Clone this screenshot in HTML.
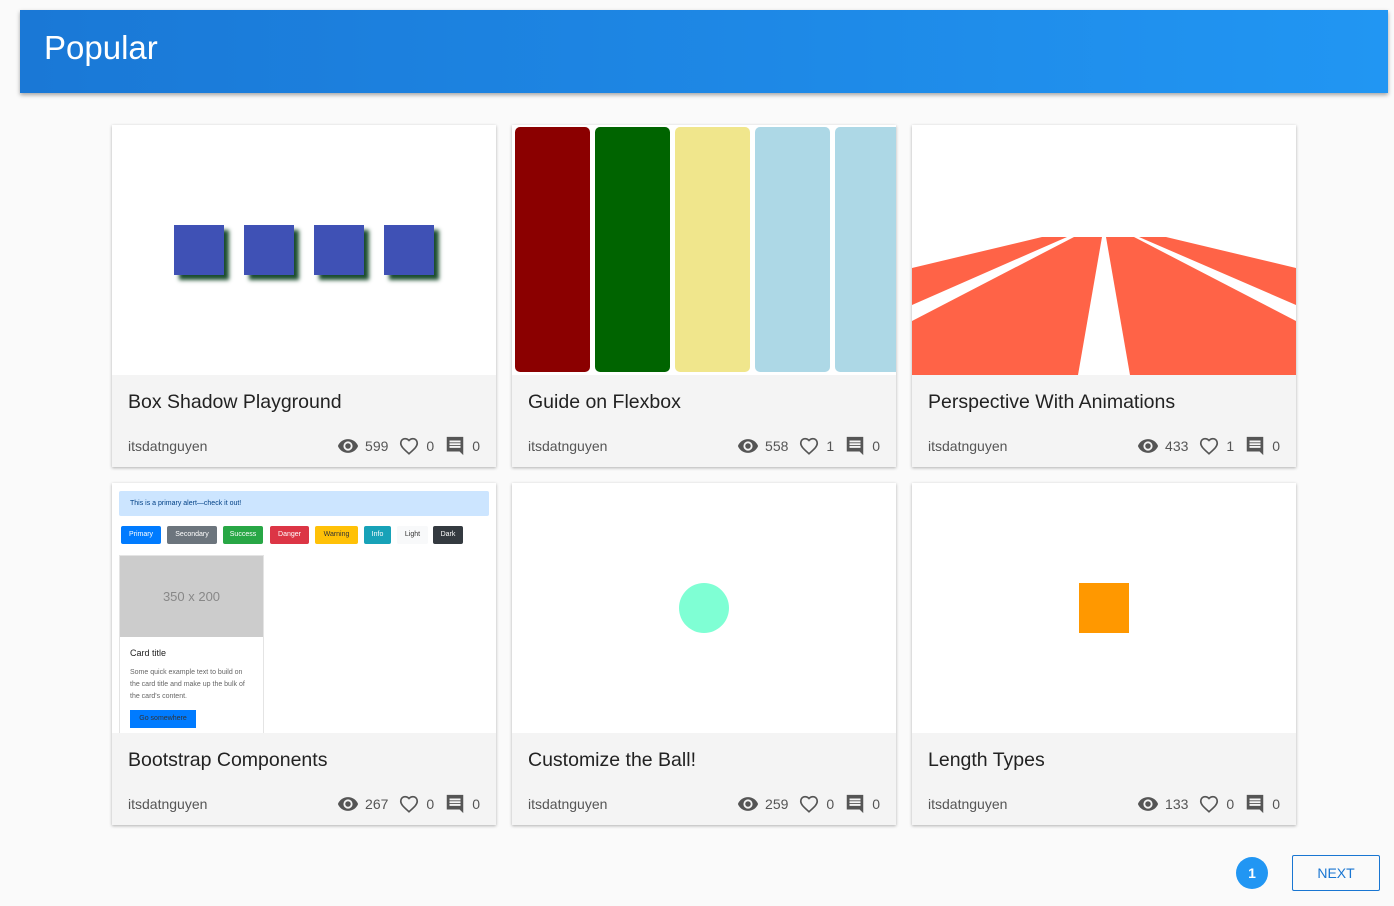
<!DOCTYPE html>
<html><head><meta charset="utf-8"><style>
*{box-sizing:border-box;margin:0;padding:0}
body{width:1394px;height:906px;background:#fafafa;font-family:"Liberation Sans",sans-serif;position:relative;overflow:hidden}
.hdr{position:absolute;left:20px;top:10px;width:1368px;height:83px;background:linear-gradient(90deg,#1a78d6,#2196f3);box-shadow:0 2px 4px rgba(0,0,0,.35)}
.hdr h1{position:absolute;left:24px;top:19px;color:#fff;font-weight:normal;font-size:33px}
.card{position:absolute;width:384px;height:342px;background:#f4f4f4;box-shadow:0 1px 3px rgba(0,0,0,.3);overflow:hidden}
.img{position:absolute;left:0;top:0;width:384px;height:250px;background:#fff;overflow:hidden}
.t{position:absolute;left:16px;top:266px;font-size:19.5px;color:#222}
.a{position:absolute;left:16px;top:313px;font-size:14px;color:#555}
.s{position:absolute;right:16px;top:310px;display:flex;align-items:center;font-size:14px;color:#555}
.s svg{display:block}
.s span{margin:0 10px 0 6px}
.s span:last-child{margin-right:0}
.sq{position:absolute;top:100px;width:50px;height:50px;background:#3f51b5;box-shadow:5px 5px 4px #1b4d2e}
.bar{position:absolute;top:2px;width:75px;height:245px;border-radius:5px}
.btn{position:absolute;top:43px;height:18px;font-size:7px;line-height:18px;color:#fff;text-align:center;border-radius:2px}
</style></head><body>
<div class="hdr"><h1>Popular</h1></div>

<svg width="0" height="0" style="position:absolute"><defs>
<symbol id="eye" viewBox="0 0 24 24"><path fill="#555" d="M12 4.5C7 4.5 2.7 7.6 1 12c1.7 4.4 6 7.5 11 7.5s9.3-3.1 11-7.5c-1.7-4.4-6-7.5-11-7.5zM12 17a5 5 0 110-10 5 5 0 010 10zm0-8a3 3 0 100 6 3 3 0 000-6z"/></symbol>
<symbol id="heart" viewBox="0 0 24 24"><path fill="none" stroke="#555" stroke-width="1.8" d="M12 20.5l-1.3-1.2C5.9 15 3 12.3 3 8.9 3 6.2 5.1 4 7.7 4c1.6 0 3.2.8 4.3 2 1.1-1.2 2.7-2 4.3-2C18.9 4 21 6.2 21 8.9c0 3.4-2.9 6.1-7.7 10.4z"/></symbol>
<symbol id="cmt" viewBox="0 0 24 24"><path fill="#555" d="M21 2H3v16h14l4 4zM18 14H6v-2h12zm0-3H6V9h12zm0-3H6V6h12z"/></symbol>
</defs></svg>

<div class="card" style="left:112px;top:125px">
<div class="img">
<div class="sq" style="left:62px"></div><div class="sq" style="left:132px"></div><div class="sq" style="left:202px"></div><div class="sq" style="left:272px"></div>
</div>
<div class="t">Box Shadow Playground</div><div class="a">itsdatnguyen</div>
<div class="s"><svg width="22" height="22"><use href="#eye"/></svg><span>599</span><svg width="22" height="22"><use href="#heart"/></svg><span>0</span><svg width="22" height="22"><use href="#cmt"/></svg><span>0</span></div>
</div>
<div class="card" style="left:512px;top:125px">
<div class="img">
<div class="bar" style="left:2.5px;background:#8b0000"></div>
<div class="bar" style="left:82.5px;background:#006400"></div>
<div class="bar" style="left:162.5px;background:#f0e68c"></div>
<div class="bar" style="left:242.5px;background:#add8e6"></div>
<div class="bar" style="left:322.5px;background:#add8e6"></div>
</div>
<div class="t">Guide on Flexbox</div><div class="a">itsdatnguyen</div>
<div class="s"><svg width="22" height="22"><use href="#eye"/></svg><span>558</span><svg width="22" height="22"><use href="#heart"/></svg><span>1</span><svg width="22" height="22"><use href="#cmt"/></svg><span>0</span></div>
</div>
<div class="card" style="left:912px;top:125px">
<div class="img"><svg width="384" height="250">
<polygon fill="#ff6347" points="0,143 130,112 155,112 0,180"/>
<polygon fill="#ff6347" points="0,196 162,112 190,112 166,250 0,250"/>
<polygon fill="#ff6347" points="194,112 222,112 384,196 384,250 218,250"/>
<polygon fill="#ff6347" points="227,112 254,112 384,143 384,180"/>
</svg></div>
<div class="t">Perspective With Animations</div><div class="a">itsdatnguyen</div>
<div class="s"><svg width="22" height="22"><use href="#eye"/></svg><span>433</span><svg width="22" height="22"><use href="#heart"/></svg><span>1</span><svg width="22" height="22"><use href="#cmt"/></svg><span>0</span></div>
</div>
<div class="card" style="left:112px;top:483px">
<div class="img">
<div style="position:absolute;left:7px;top:8px;width:370px;height:25px;background:#cce5ff;border-radius:2px;color:#004085;font-size:7px;line-height:25px;padding-left:11px">This is a primary alert—check it out!</div>
<div class="btn" style="left:9px;width:40px;background:#007bff">Primary</div>
<div class="btn" style="left:55px;width:50px;background:#6c757d">Secondary</div>
<div class="btn" style="left:111px;width:40px;background:#28a745">Success</div>
<div class="btn" style="left:158px;width:39px;background:#dc3545">Danger</div>
<div class="btn" style="left:203px;width:43px;background:#ffc107;color:#333">Warning</div>
<div class="btn" style="left:252px;width:27px;background:#17a2b8">Info</div>
<div class="btn" style="left:285px;width:31px;background:#f8f9fa;color:#333">Light</div>
<div class="btn" style="left:321px;width:30px;background:#343a40">Dark</div>
<div style="position:absolute;left:7px;top:72px;width:145px;height:180px;border:1px solid #e4e4e4">
<div style="height:81px;background:#ccc;color:#888;font-size:13px;text-align:center;line-height:81px">350 x 200</div>
<div style="padding:11px 10px 9px;font-size:9px;color:#222">Card title</div>
<div style="padding:0 10px;font-size:7px;color:#666;line-height:12px">Some quick example text to build on the card title and make up the bulk of the card's content.</div>
<div style="margin:7px 10px;width:66px;height:18px;background:#007bff;color:#333;font-size:7px;line-height:18px;text-align:center">Go somewhere</div>
</div>
</div>
<div class="t">Bootstrap Components</div><div class="a">itsdatnguyen</div>
<div class="s"><svg width="22" height="22"><use href="#eye"/></svg><span>267</span><svg width="22" height="22"><use href="#heart"/></svg><span>0</span><svg width="22" height="22"><use href="#cmt"/></svg><span>0</span></div>
</div>
<div class="card" style="left:512px;top:483px">
<div class="img"><div style="position:absolute;left:167px;top:100px;width:50px;height:50px;border-radius:50%;background:#7fffd4"></div></div>
<div class="t">Customize the Ball!</div><div class="a">itsdatnguyen</div>
<div class="s"><svg width="22" height="22"><use href="#eye"/></svg><span>259</span><svg width="22" height="22"><use href="#heart"/></svg><span>0</span><svg width="22" height="22"><use href="#cmt"/></svg><span>0</span></div>
</div>
<div class="card" style="left:912px;top:483px">
<div class="img"><div style="position:absolute;left:167px;top:100px;width:50px;height:50px;background:#ff9800"></div></div>
<div class="t">Length Types</div><div class="a">itsdatnguyen</div>
<div class="s"><svg width="22" height="22"><use href="#eye"/></svg><span>133</span><svg width="22" height="22"><use href="#heart"/></svg><span>0</span><svg width="22" height="22"><use href="#cmt"/></svg><span>0</span></div>
</div>

<div style="position:absolute;left:1236px;top:857px;width:32px;height:32px;border-radius:50%;background:#2196f3;color:#fff;font-size:14px;font-weight:bold;text-align:center;line-height:32px">1</div>
<div style="position:absolute;left:1292px;top:855px;width:88px;height:36px;border:1px solid #1976d2;border-radius:2px;color:#1976d2;font-size:14px;text-align:center;line-height:34px">NEXT</div>
</body></html>
